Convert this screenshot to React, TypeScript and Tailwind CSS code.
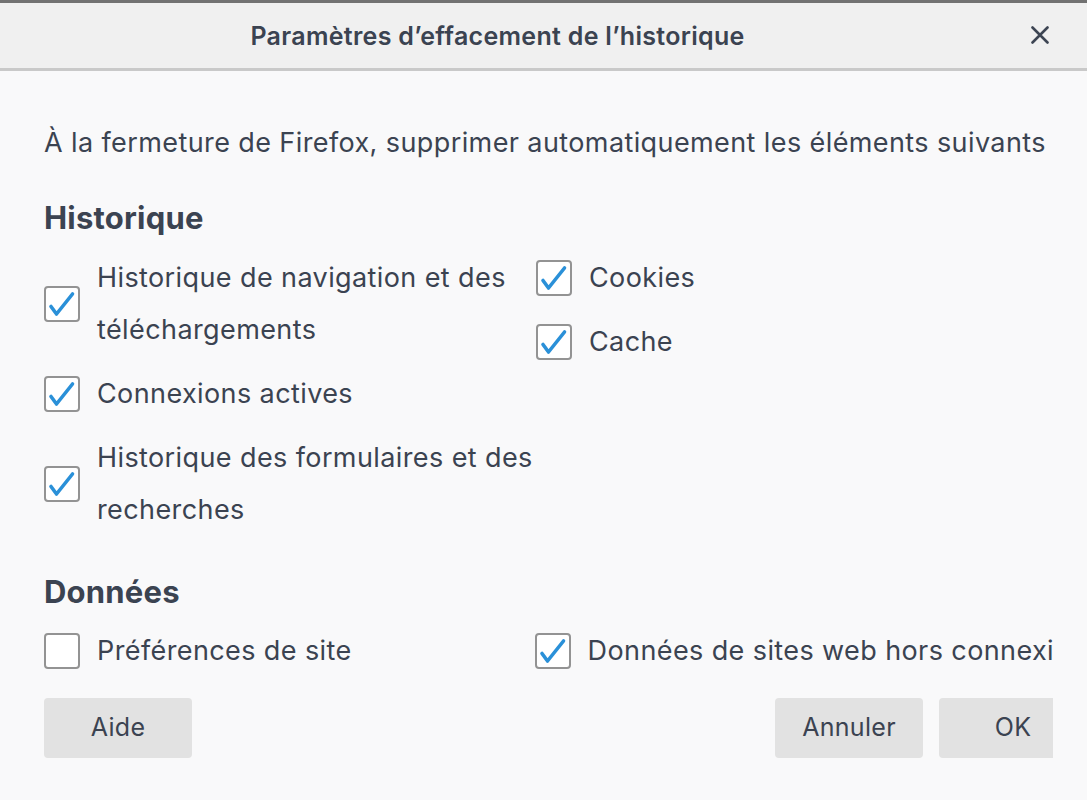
const textColor = "text-[#3b4351]";

function Check({ checked }: { checked: boolean }) {
  return (
    <span className="flex h-[36px] w-[36px] shrink-0 items-center justify-center rounded-[4px] border-2 border-[#939393] bg-white">
      {checked && (
        <svg width="36" height="36" viewBox="0 0 36 36" className="-m-[2px]">
          <path
            d="M7 20.5 L12.5 28 L28.5 8"
            fill="none"
            stroke="#2a90d8"
            strokeWidth="3.6"
            strokeLinecap="round"
            strokeLinejoin="round"
          />
        </svg>
      )}
    </span>
  );
}

function Item({ label, checked = true }: { label: string; checked?: boolean }) {
  return (
    <div className="flex items-center gap-[17px]">
      <Check checked={checked} />
      <span className="text-[27px] leading-[52px] tracking-[0.4px]">{label}</span>
    </div>
  );
}

function Button({ children, className = "" }: { children: string; className?: string }) {
  return (
    <button
      className={`flex h-[60px] w-[148px] shrink-0 items-center justify-center rounded-[4px] bg-[#e2e2e2] text-[25px] tracking-[0.3px] ${textColor} ${className}`}
    >
      {children}
    </button>
  );
}

export default function App() {
  return (
    <div
      className={`h-[800px] w-[1087px] overflow-hidden bg-[#f9f9fa] ${textColor}`}
      style={{ fontFamily: "Inter, 'Liberation Sans', sans-serif" }}
    >
      {/* Title bar */}
      <div className="border-t-[3px] border-b-[3px] border-t-[#727272] border-b-[#c9c9c9] bg-[#f0f0f0]">
        <div className="flex h-[65px] items-center pt-[3px]">
          <div className="w-[995px] text-center text-[25px] font-semibold tracking-[0.3px]">
            Paramètres d’effacement de l’historique
          </div>
          <svg width="18" height="18" viewBox="0 0 18 18" className="ml-[36px] -mt-[4px]">
            <path d="M1.5 1.5 L16.5 16.5 M16.5 1.5 L1.5 16.5" stroke="#3d4553" strokeWidth="2.6" strokeLinecap="round" />
          </svg>
        </div>
      </div>

      {/* Body */}
      <div className="pl-[44px]">
        <div className="w-[1009px] overflow-hidden">
          <div className="w-[1043px]">
            <p className="mt-[46px] whitespace-nowrap text-[27px] leading-[52px] tracking-[0.4px]">
              À la fermeture de Firefox, supprimer automatiquement les éléments suivants
            </p>

            <h2 className="mt-[29px] text-[31px] font-bold leading-[40px] tracking-[0.2px]">Historique</h2>
            <div className="mt-[14px] flex">
              <div className="flex w-[492px] flex-col gap-[12px]">
                <Item label="Historique de navigation et des téléchargements" />
                <Item label="Connexions actives" />
                <Item label="Historique des formulaires et des recherches" />
              </div>
              <div className="flex flex-col gap-[12px]">
                <Item label="Cookies" />
                <Item label="Cache" />
              </div>
            </div>

            <h2 className="mt-[36px] text-[31px] font-bold leading-[40px] tracking-[0.2px]">Données</h2>
            <div className="mt-[13px] flex">
              <div className="w-[492px]">
                <Item label="Préférences de site" checked={false} />
              </div>
              <div className="whitespace-nowrap">
                <Item label="Données de sites web hors connexion" />
              </div>
            </div>

            <div className="mt-[21px] flex justify-between">
              <Button>Aide</Button>
              <div className="flex gap-[16px]">
                <Button>Annuler</Button>
                <Button>OK</Button>
              </div>
            </div>
          </div>
        </div>
      </div>
    </div>
  );
}
